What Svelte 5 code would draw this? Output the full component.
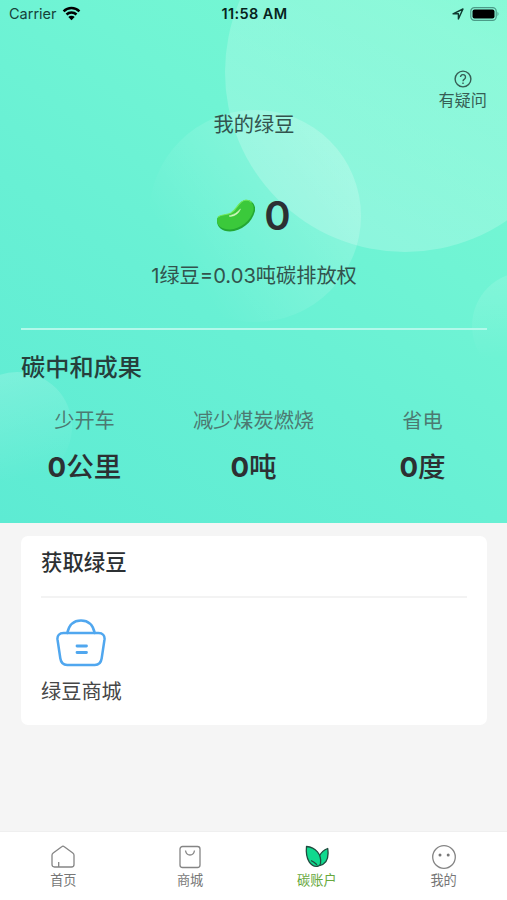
<script lang="ts">
	const results = [
		{ label: '少开车', value: 0, unit: '公里' },
		{ label: '减少煤炭燃烧', value: 0, unit: '吨' },
		{ label: '省电', value: 0, unit: '度' }
	];

	const tabs = [
		{ id: 'home', label: '首页' },
		{ id: 'shop', label: '商城' },
		{ id: 'carbon', label: '碳账户' },
		{ id: 'me', label: '我的' }
	];

	let active = $state('carbon');
</script>

<div class="page">
	<section class="hero">
		<svg class="bubbles" viewBox="0 0 507 523" aria-hidden="true">
			<defs>
				<linearGradient id="big" x1="0.3" y1="0.9" x2="0.75" y2="0">
					<stop offset="0" stop-color="#fff" stop-opacity="0.21" />
					<stop offset="0.6" stop-color="#fff" stop-opacity="0.16" />
					<stop offset="1" stop-color="#fff" stop-opacity="0.03" />
				</linearGradient>
				<linearGradient id="middle" x1="0.9" y1="0.2" x2="0.15" y2="0.7">
					<stop offset="0" stop-color="#fff" stop-opacity="0.21" />
					<stop offset="1" stop-color="#fff" stop-opacity="0" />
				</linearGradient>
				<linearGradient id="small" x1="0.2" y1="0" x2="0.5" y2="1">
					<stop offset="0" stop-color="#fff" stop-opacity="0.18" />
					<stop offset="1" stop-color="#fff" stop-opacity="0" />
				</linearGradient>
				<linearGradient id="edge" x1="0.2" y1="0" x2="0.3" y2="1">
					<stop offset="0" stop-color="#fff" stop-opacity="0.13" />
					<stop offset="0.8" stop-color="#fff" stop-opacity="0" />
				</linearGradient>
			</defs>
			<circle cx="405" cy="72" r="180" fill="url(#big)" />
			<circle cx="255" cy="216" r="106" fill="url(#middle)" />
			<circle cx="17" cy="427" r="55" fill="url(#small)" />
			<circle cx="526" cy="326" r="54" fill="url(#edge)" />
		</svg>

		<header class="status">
			<div class="carrier">
				Carrier
				<svg width="19" height="15" viewBox="0 0 19 15">
					<path d="M1.6 5.3a11.4 11.4 0 0 1 15.8 0M4.5 8.5a7.2 7.2 0 0 1 10 0" fill="none" stroke="#000" stroke-width="2.5" />
					<path d="M9.5 14.2 6.3 11a4.6 4.6 0 0 1 6.4 0z" />
				</svg>
			</div>
			<time>11:58 AM</time>
			<div class="indicators">
				<svg width="12" height="12" viewBox="0 0 12 12">
					<path d="M1 5.8 11 1 6.4 10.9V5.8z" fill="none" stroke="#103a30" stroke-width="1.4" stroke-linejoin="round" />
				</svg>
				<svg width="30" height="14" viewBox="0 0 30 14">
					<rect x="0.8" y="0.7" width="25.4" height="12.6" rx="3.6" fill="none" stroke="#4b9b87" stroke-width="1.2" />
					<rect x="2.5" y="2.4" width="22" height="9.2" rx="2" />
					<path d="M27.5 4.8q2 2.2 0 4.4z" fill="#4b9b87" />
				</svg>
			</div>
		</header>

		<button class="help">
			<svg width="18" height="18" viewBox="0 0 18 18" fill="none" stroke="#365d54" stroke-width="1.4">
				<circle cx="9" cy="9" r="7.9" />
				<path d="M6.5 7.1a2.5 2.5 0 1 1 3.9 2.1C9.4 9.8 9 10.2 9 11.3M9 12.6v1.4" />
			</svg>
			有疑问
		</button>

		<div class="balance">
			<p class="caption">我的绿豆</p>
			<div class="amount">
				<svg width="38" height="34" viewBox="0 0 38 34">
					<path d="M0 22C0 15 8 17 14 14 21 10 21 2 29 1c6-.5 10 5 9 11C35 24 24 32 13 32.500 5 32.500 0 28 0 22z" fill="#24a832" />
					<path d="M0 21C0 15 8 17 14 14 21 10 21 2 29 1c5 0 8.500 5 7.500 10.500C34 22 23 30 13 30.500 5 30.500 0 27 0 21z" fill="#3bc93b" />
					<path d="M1 18c3-3 8-1.500 13-4C21 10 21 2 29 1q3.500 0 5.500 2.500" fill="none" stroke="#74e95c" stroke-width="1.2" />
					<path d="M12 17q7-1.500 11.500-7-2.500 6.500-10 7.500z" fill="#d8f8c4" stroke="#d8f8c4" stroke-width="0.500" />
				</svg>
				<strong>0</strong>
			</div>
			<p class="rate">1绿豆=0.03吨碳排放权</p>
		</div>

		<h2>碳中和成果</h2>
		<div class="results">
			{#each results as result}
				<div>
					<p>{result.label}</p>
					<div class="value"><strong>{result.value}</strong>{result.unit}</div>
				</div>
			{/each}
		</div>
	</section>

	<section class="card">
		<h3>获取绿豆</h3>
		<div class="entry">
			<svg width="50" height="48" viewBox="0 0 50 48" fill="none" stroke="#50a7ef" stroke-width="2.5" stroke-linecap="round" stroke-linejoin="round">
				<path d="M11.300 14C13 5.500 18 1.400 25 1.400S37 5.500 38.700 14" />
				<path d="M7.500 14h35c4 0 6.500 2.500 6 6.500l-2.800 18.800c-.6 4.200-2.700 6.700-6.900 6.700H11.200c-4.200 0-6.300-2.500-6.900-6.700L1.500 20.500C1 16.500 3.500 14 7.500 14z" />
				<path d="M21 27h9.500M21 33.500h9.500" stroke-width="2.8" />
			</svg>
			<span>绿豆商城</span>
		</div>
	</section>

	<nav>
		{#each tabs as tab}
			<button class:active={active === tab.id} onclick={() => (active = tab.id)}>
				<svg width="26" height="26" viewBox="0 0 26 26" fill="none" stroke="#858585" stroke-width="1.3" stroke-linejoin="round">
					{#if tab.id === 'home'}
						<path d="M13 2.200q.7 0 1.300.5l8.500 6.300q1.200.9 1.200 2.200V20.500q0 2.500-2.500 2.500h-17Q2 23 2 20.500v-9.300Q2 9.900 3.200 9l8.500-6.300q.6-.5 1.300-.5zM8.700 23v-5" />
					{:else if tab.id === 'shop'}
						<rect x="3" y="2.500" width="20" height="21" rx="2.500" />
						<path d="M8.500 6.500c1 6 8 6 9 0" />
					{:else if tab.id === 'carbon'}
						<g fill="#10d98e" stroke="#204b3e" stroke-width="1.300">
							<path d="M15.500 21.500C13 14 16 7.500 23.700 4.500c1.300 9-.5 15.500-8.200 17z" />
							<path d="M14.500 22C7 24 1.200 15.500 2.500 2.500c9 .7 15.500 8 14 17.200q-.5 1.800-2 2.300z" />
							<path d="M7 16.500q3 1.500 6 4.300" fill="none" />
						</g>
					{:else}
						<circle cx="13" cy="13" r="11.300" />
						<g fill="#777" stroke="none">
							<circle cx="9" cy="11" r="1.500" />
							<circle cx="17.200" cy="11" r="1.500" />
						</g>
					{/if}
				</svg>
				{tab.label}
			</button>
		{/each}
	</nav>
</div>

<style>
	:global(body) {
		margin: 0;
	}

	.page {
		display: flex;
		flex-direction: column;
		height: 900px;
		background: #f5f5f5;
		color: #2c3033;
		font-family: Inter, 'Noto Sans CJK SC', sans-serif;
	}

	p,
	h2,
	h3 {
		margin: 0;
	}

	button {
		padding: 0;
		border: none;
		background: none;
		font-family: inherit;
	}

	.hero {
		position: relative;
		box-sizing: border-box;
		display: flex;
		flex-direction: column;
		height: 523px;
		padding: 0 20px 0 21px;
		background: linear-gradient(35deg, #5debd3 0%, #68f0d4 40%, #70f4d4 65%, #79f9d2 100%);
	}

	.bubbles {
		position: absolute;
		inset: 0;
		width: 100%;
		height: 100%;
	}

	.hero > :not(.bubbles) {
		position: relative;
	}

	.status {
		display: grid;
		grid-template-columns: 1fr auto 1fr;
		align-items: center;
		height: 27px;
		margin: 0 -13px 0 -12px;
		font-size: 14.5px;
	}

	.carrier {
		display: flex;
		align-items: center;
		gap: 5px;
		color: #164239;
	}

	.status time {
		color: #06231c;
		font-weight: 600;
		letter-spacing: 0.4px;
	}

	.indicators {
		display: flex;
		align-items: center;
		justify-content: flex-end;
		gap: 6px;
	}

	.help {
		display: flex;
		flex-direction: column;
		align-items: center;
		align-self: flex-end;
		margin-top: 43px;
		color: #365d54;
		font-size: 16.2px;
		line-height: 24px;
	}

	.balance {
		display: flex;
		flex-direction: column;
		align-items: center;
		height: 216px;
		border-bottom: 2px solid #b2f9ea;
		color: #32534d;
		font-size: 20.2px;
		line-height: 28px;
	}

	.caption {
		margin-top: -1px;
	}

	.amount {
		display: flex;
		align-items: center;
		gap: 9px;
		height: 60px;
		margin: 47px 0 16px;
	}

	.amount strong {
		color: #2c3033;
		font-size: 40px;
		line-height: 60px;
		font-weight: 600;
	}

	h2 {
		margin-top: 20px;
		color: #263f3c;
		font-size: 24.2px;
		line-height: 36px;
		font-weight: 500;
	}

	.results {
		display: grid;
		grid-template-columns: repeat(3, 1fr);
		margin: 21px -20px 0 -21px;
		text-align: center;
	}

	.results p {
		color: #4c7971;
		font-size: 20.2px;
		line-height: 28px;
	}

	.value {
		margin-top: 12px;
		font-size: 27.6px;
		line-height: 40px;
		font-weight: 500;
	}

	.card {
		box-sizing: border-box;
		height: 189px;
		margin: 13px 20px 0 21px;
		padding: 0 20px;
		border-radius: 7px;
		background: #fff;
	}

	.card h3 {
		height: 60px;
		border-bottom: 2px solid #f3f3f3;
		font-size: 21.4px;
		line-height: 52px;
		font-weight: 500;
	}

	.entry {
		display: inline-flex;
		flex-direction: column;
		align-items: center;
		padding-top: 21px;
		color: #464646;
		font-size: 20.2px;
		line-height: 30px;
	}

	.entry span {
		margin-top: 10px;
	}

	nav {
		box-sizing: border-box;
		display: grid;
		grid-template-columns: repeat(4, 1fr);
		height: 69px;
		margin-top: auto;
		padding-top: 12px;
		border-top: 1px solid #efefef;
		background: #fff;
	}

	nav button {
		display: flex;
		flex-direction: column;
		align-items: center;
		color: #777;
		font-size: 13.2px;
		line-height: 20px;
	}

	nav button.active {
		color: #67a83c;
	}
</style>
